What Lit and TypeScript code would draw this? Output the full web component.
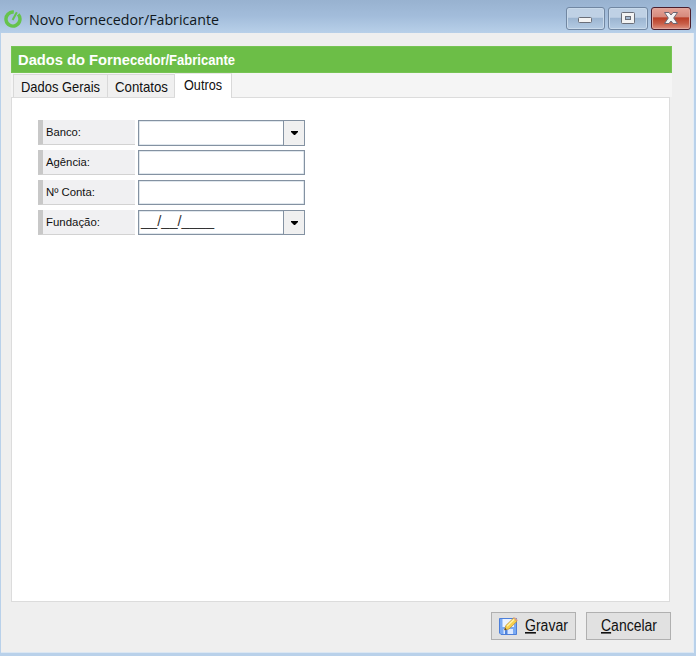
import { LitElement, html, svg, css, nothing } from "lit";
import { customElement, property } from "lit/decorators.js";

/** A single line of text condensed or stretched to an exact width. */
@customElement("fit-text")
class FitText extends LitElement {
  @property() text = "";
  @property() mnemonic = "";
  @property({ type: Number }) w = 80;
  static styles = css`
    :host { display: block; flex: none; line-height: 0; }
    svg { display: block; overflow: visible; }
    .key { text-decoration: underline; }
  `;
  render() {
    return html`<svg width=${this.w} height="20">
      <text x="0" y="15" textLength=${this.w} lengthAdjust="spacingAndGlyphs" fill="currentColor">${this.mnemonic ? svg`<tspan class="key">${this.mnemonic}</tspan>` : nothing}${this.text}</text>
    </svg>`;
  }
}

const rows = [
  { label: "Banco:", w: 35, tall: true, drop: true },
  { label: "Agência:", w: 44 },
  { label: "Nº Conta:", w: 49 },
  { label: "Fundação:", w: 54, drop: true, mask: "__/__/____" },
];

@customElement("app-root")
class AppRoot extends LitElement {
  static styles = css`
    :host { display: block; width: 696px; height: 656px; overflow: hidden; }
    * { box-sizing: border-box; }
    .window { width: 696px; height: 656px; background: #b9d1ea; display: flex; flex-direction: column; font-family: "Liberation Sans", Arial, sans-serif; color: #111; }
    .title { height: 33px; flex: none; background: linear-gradient(#98b2d0, #a3bddb 50%, #b8d0e9); display: flex; padding: 0 5px 0 4px; }
    .logo { width: 18px; height: 18px; margin: 10px 7px 0 0; }
    .caption { margin-top: 10px; font: 15px "Open Sans", "Noto Sans", sans-serif; color: #101820; }
    .controls { display: flex; gap: 3px; margin: 7px 0 0 auto; }
    .ctl { width: 40px; height: 23px; border: 1px solid #7187a2; border-radius: 3px; box-shadow: inset 0 0 0 1px #c9daeb; background: linear-gradient(#bfd1e5 0 45%, #9bb4d0 46%, #b4cbe3); }
    .ctl.min { width: 39px; }
    .ctl.close { border-color: #4b1e2c; box-shadow: inset 0 0 0 1px #e0a79e; background: linear-gradient(#e5a397, #d5897c 44%, #b93c25 46%, #c95f49 75%, #dd9181); }
    .ctl svg { display: block; }
    .body { width: 693px; height: 620px; margin-left: 1px; background: #efefef; border-right: 1px solid #e3edf7; border-bottom: 1px solid #dbe7f3; padding: 13px 21px 0 10px; display: flex; flex-direction: column; }
    .head { height: 27px; flex: none; background: #6cbe47; border: 1px solid #77c454; color: #fff; font-weight: bold; font-size: 14.5px; padding: 3px 0 0 6px; display: flex; }
    .tabs { height: 24px; flex: none; display: flex; align-items: flex-end; padding-left: 2px; background: #f5f5f5; }
    .tab { height: 23px; background: #f0f0f0; border: 1px solid #d9d9d9; border-bottom: 0; padding: 2px 0 0 7px; font-size: 15px; }
    .tab.general { width: 95px; }
    .tab.contacts { width: 67px; border-left: 0; }
    .tab.active { width: 57px; height: 25px; margin-bottom: -1px; background: #fff; border-left: 0; border-top-color: #e8e8e8; padding: 1px 0 0 9px; z-index: 1; }
    .panel { width: 659px; height: 505px; flex: none; background: #fff; border: 1px solid #dcdcdc; padding: 22px 0 0 26px; display: flex; flex-direction: column; gap: 5px; }
    .row { display: flex; gap: 3px; height: 25px; }
    .label { width: 97px; height: 25px; background: #f0f0f2; border-left: 5px solid #c8c8c8; border-bottom: 1px solid #d2d2d2; padding: 1px 0 0 3px; font-size: 11.5px; }
    .field { width: 167px; height: 25px; border: 1px solid #8492a2; box-shadow: inset 0 0 0 0.5px #c2cfdb; background: #fff; display: flex; justify-content: flex-end; }
    .field.tall { height: 26px; }
    .mask { margin: 0 auto 0 2px; font-size: 15px; color: #333; }
    .drop { width: 21px; background: #f0f0f0; border-left: 1px solid #8492a2; display: flex; align-items: center; justify-content: center; }
    .actions { display: flex; justify-content: flex-end; gap: 10px; margin: 10px 1px 0 0; font-size: 16px; }
    .button { width: 85px; height: 28px; background: #e1e1e1; border: 1px solid #b0b0b0; display: flex; align-items: center; justify-content: center; gap: 7px; }
    .button svg { flex: none; }
  `;

  render() {
    return html`
      <div class="window">
        <div class="title">
          <svg class="logo" viewBox="0 0 18 18" fill="none" stroke="#66c34c">
            <path d="M14.2 4.4A7 7 0 1 1 9.8 2.1" stroke-width="3.4" />
            <path d="M8.6 10L12.8 2.2" stroke-width="2" />
          </svg>
          <fit-text class="caption" text="Novo Fornecedor/Fabricante" .w=${190}></fit-text>
          <div class="controls">
            <div class="ctl min"><svg width="37" height="21"><rect x="11.5" y="9.5" width="13" height="5" rx="1" fill="#f3f3f3" stroke="#6a6e78" /></svg></div>
            <div class="ctl"><svg width="38" height="21" stroke="#6a6e78"><rect x="12.5" y="4.5" width="13" height="11" rx="1" fill="#f3f3f3" /><rect x="16.5" y="8.5" width="5" height="3" fill="#a3b8d0" /></svg></div>
            <div class="ctl close"><svg width="38" height="21"><path d="M12.5 4.5H17L19 7L21 4.5H25.5L21.7 10L25.5 15.5H21L19 13L17 15.5H12.5L16.3 10Z" fill="#f4f4f4" stroke="#6b6672" stroke-linejoin="round" /></svg></div>
          </div>
        </div>
        <div class="body">
          <div class="head"><fit-text text="Dados do Forne" .w=${112}></fit-text><fit-text text="cedor/Fabricante" .w=${105}></fit-text></div>
          <div class="tabs">
            <div class="tab general"><fit-text text="Dados Gerais" .w=${79}></fit-text></div>
            <div class="tab contacts"><fit-text text="Contatos" .w=${53}></fit-text></div>
            <div class="tab active"><fit-text text="Outros" .w=${38}></fit-text></div>
          </div>
          <div class="panel">
            ${rows.map((r) => html`
              <div class="row">
                <div class="label"><fit-text .text=${r.label} .w=${r.w}></fit-text></div>
                <div class="field ${r.tall ? "tall" : ""}">
                  ${r.mask ? html`<fit-text class="mask" .text=${r.mask} .w=${73}></fit-text>` : nothing}
                  ${r.drop ? html`<div class="drop"><svg width="7" height="4"><path d="M0 0H7V1L4 4H3L0 1Z" fill="#000" /></svg></div>` : nothing}
                </div>
              </div>`)}
          </div>
          <div class="actions">
            <div class="button">
              <svg width="19" height="19" viewBox="0 0 19 19">
                <path d="M.5 1.5H17.5V17.5H2L.5 16Z" fill="#79a9f3" stroke="#4d7fd9" />
                <path d="M3.5 2H15V10H3.5Z" fill="#eaf2ff" />
                <path d="M4.5 12H14V17H4.5Z" fill="#dce9ff" />
                <path d="M6 13H8.5V17H6Z" fill="#4f83dc" />
                <path d="M5.5 13L6.8 8.6L14.6 1L18 4.3L10 12Z" fill="#f7cf4c" stroke="#b8892f" stroke-width=".7" />
                <path d="M8 9.2L15.2 2.2" stroke="#fff3a8" stroke-width="1.3" />
                <path d="M14.6 1L15.8 .2L18.8 3.2L18 4.3Z" fill="#e5a184" />
                <path d="M5.5 13L6.1 10.9L7.7 12.4Z" fill="#3c3328" />
              </svg>
              <fit-text mnemonic="G" text="ravar" .w=${43}></fit-text>
            </div>
            <div class="button"><fit-text mnemonic="C" text="ancelar" .w=${56}></fit-text></div>
          </div>
        </div>
      </div>`;
  }
}
